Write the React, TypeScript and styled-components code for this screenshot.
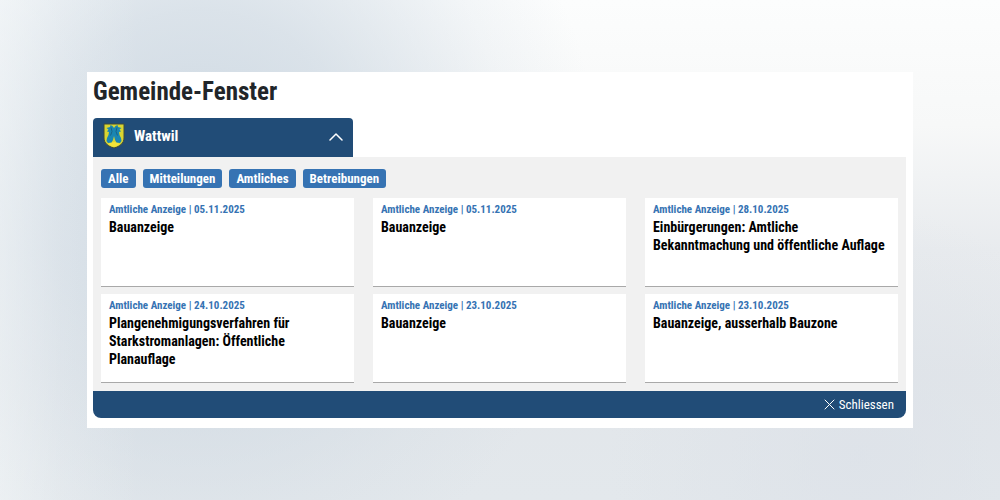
import React, { useState } from "react";
import styled, { createGlobalStyle } from "styled-components";

const GlobalStyle = createGlobalStyle`
  *, *::before, *::after { box-sizing: border-box; }
  body {
    margin: 0;
    font-family: "Roboto Condensed", "Liberation Sans Narrow", Roboto, sans-serif;
    color: #000;
  }
  button { font: inherit; border: 0; cursor: pointer; }
  h1, h2, p, ul { margin: 0; padding: 0; }
`;

const Page = styled.div`
  min-height: 100vh;
  display: flex;
  align-items: center;
  justify-content: center;
  padding: 24px 87px;
  background:
    linear-gradient(90deg, rgba(246, 249, 250, 0.5) 0%, rgba(246, 249, 250, 0.2) 6%, rgba(246, 249, 250, 0) 14%),
    radial-gradient(ellipse 40% 85% at 20% 36%, #cdd8e2 0%, rgba(205, 216, 226, 0.7) 40%, rgba(205, 216, 226, 0.2) 78%, rgba(205, 216, 226, 0) 100%),
    radial-gradient(ellipse 25% 50% at 86% 91%, rgba(220, 225, 232, 0.7) 0%, rgba(220, 225, 232, 0) 100%),
    linear-gradient(180deg, #fcfdfd 0%, #f7f8f8 25%, #e8ebee 50%, #e2e6ea 75%, #e3e8ec 100%);
`;

const Sheet = styled.main`
  width: 100%;
  max-width: 1200px;
  padding: 5px 7px 10px 6px;
  background: #fff;
`;

const Title = styled.h1`
  margin-bottom: 11px;
  font-size: 25px;
  line-height: 30px;
  font-weight: 700;
  color: #212529;
`;

const Tab = styled.button`
  display: flex;
  align-items: center;
  gap: 9px;
  width: 32%;
  min-width: 200px;
  height: 39px;
  padding: 0 10px 4px;
  border-radius: 4px 4px 0 0;
  background: #214c77;
  color: #fff;
  text-align: left;
`;

const TabLabel = styled.span`
  flex: 1;
  font-size: 15px;
  line-height: 18px;
  font-weight: 700;
`;

const Panel = styled.section`
  padding: 12px 8px 8px;
  background: #f1f1f1;
`;

const Filters = styled.nav`
  display: flex;
  flex-wrap: wrap;
  gap: 7px;
  margin-bottom: 10px;
`;

const Filter = styled.button`
  padding: 0 7px;
  border-radius: 3px;
  background: #3673b3;
  color: #fff;
  font-size: 13px;
  line-height: 19px;
  font-weight: 700;
`;

const Notices = styled.ul`
  display: grid;
  grid-template-columns: repeat(3, 1fr);
  gap: 7px 19px;
  list-style: none;
`;

const Notice = styled.li`
  min-height: 89px;
  padding: 3px 8px 8px;
  border-bottom: 1px solid #a9a9a9;
  background: #fff;
`;

const Meta = styled.p`
  font-size: 11px;
  line-height: 17px;
  font-weight: 700;
  color: #3673b3;
`;

const Headline = styled.h2`
  font-size: 14px;
  line-height: 18px;
  font-weight: 700;
`;

const Footer = styled.footer`
  display: flex;
  justify-content: flex-end;
  padding: 0 12px;
  border-radius: 0 0 8px 8px;
  background: #214c77;
`;

const CloseButton = styled.button`
  display: flex;
  align-items: center;
  gap: 4px;
  padding: 0;
  background: none;
  color: #fff;
  font-size: 13px;
  line-height: 27px;
`;

const filters = ["Alle", "Mitteilungen", "Amtliches", "Betreibungen"];

const notices = [
  { date: "05.11.2025", title: "Bauanzeige" },
  { date: "05.11.2025", title: "Bauanzeige" },
  { date: "28.10.2025", title: "Einbürgerungen: Amtliche Bekanntmachung und öffentliche Auflage" },
  { date: "24.10.2025", title: "Plangenehmigungsverfahren für Starkstromanlagen: Öffentliche Planauflage" },
  { date: "23.10.2025", title: "Bauanzeige" },
  { date: "23.10.2025", title: "Bauanzeige, ausserhalb Bauzone" },
];

const Crest = () => (
  <svg width="22" height="26" viewBox="0 0 22 26" aria-hidden="true">
    <path d="M1 1h20v14c0 5-4 8.500-10 10C5 23.500 1 20 1 15z" fill="#d9d531" stroke="#3f4a3c" strokeWidth="1" />
    <path d="M5 21Q11 17 17 21Q14 23.500 11 24Q8 23.500 5 21z" fill="#f4e53a" />
    <path
      d="M11 5L9.500 3 7.500 2 7 4 3.500 5l2 1.500L4 8.500l2 .5-.5 3L4 15l-.5 3L5 20l3.500-.5L10 17l1-4 1 4 1.500 2.500L17 20l1.500-2-.5-3-1.500-3-.5-3 2-.5L16.500 6.500l2-1.500L15 4l-.5-2-2 1z"
      fill="#1a86b3"
    />
    <path d="M8 4.500l1 4-1.500 4M14 4.500l-1 4 1.500 4" fill="none" stroke="#1c6285" strokeWidth="1" />
  </svg>
);

const Chevron = ({ open }: { open: boolean }) => (
  <svg width="14" height="14" viewBox="0 0 14 14" aria-hidden="true">
    <path
      d={open ? "M1 11l6-6 6 6" : "M1 5l6 6 6-6"}
      fill="none"
      stroke="#fff"
      strokeWidth="1.500"
      strokeLinecap="round"
      strokeLinejoin="round"
    />
  </svg>
);

const Cross = () => (
  <svg width="11" height="11" viewBox="0 0 11 11" aria-hidden="true">
    <path d="M1 1l9 9M10 1l-9 9" stroke="#fff" strokeWidth="1" strokeLinecap="round" />
  </svg>
);

export default function App() {
  const [open, setOpen] = useState(true);

  return (
    <>
      <GlobalStyle />
      <Page>
        <Sheet>
          <Title>Gemeinde-Fenster</Title>
          <Tab aria-expanded={open} onClick={() => setOpen(!open)}>
            <Crest />
            <TabLabel>Wattwil</TabLabel>
            <Chevron open={open} />
          </Tab>
          {open && (
            <>
              <Panel>
                <Filters>
                  {filters.map((name) => (
                    <Filter key={name}>{name}</Filter>
                  ))}
                </Filters>
                <Notices>
                  {notices.map((notice, i) => (
                    <Notice key={i}>
                      <Meta>Amtliche Anzeige | {notice.date}</Meta>
                      <Headline>{notice.title}</Headline>
                    </Notice>
                  ))}
                </Notices>
              </Panel>
              <Footer>
                <CloseButton onClick={() => setOpen(false)}>
                  <Cross />
                  Schliessen
                </CloseButton>
              </Footer>
            </>
          )}
        </Sheet>
      </Page>
    </>
  );
}
